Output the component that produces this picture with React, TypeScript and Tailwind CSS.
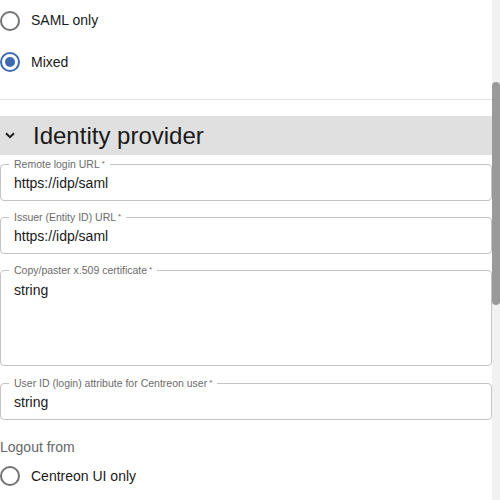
import type { ReactNode } from 'react';

function Radio({ checked = false }: { checked?: boolean }) {
  return (
    <svg width="20" height="20" viewBox="0 0 20 20" fill="none">
      <circle cx="10" cy="10" r="9" stroke={checked ? '#3d6ab0' : '#737373'} strokeWidth="2" />
      {checked && <circle cx="10" cy="10" r="5" fill="#3d6ab0" />}
    </svg>
  );
}

function RadioRow({ label, checked, className }: { label: string; checked?: boolean; className: string }) {
  return (
    <div className={`flex items-center gap-[11px] ${className}`}>
      <Radio checked={checked} />
      <span className="text-[14px] text-[#1a1a1a]">{label}</span>
    </div>
  );
}

function Field({ label, value, tall, className = '' }: { label: string; value: ReactNode; tall?: boolean; className?: string }) {
  return (
    <div
      className={`relative flex rounded-[4px] border border-[#c4c4c4] px-[13px] ${
        tall ? 'h-[96px] items-start pt-[9px]' : 'h-[37px] items-center'
      } ${className}`}
    >
      <span className="absolute -top-[7px] left-[8px] bg-white px-[5px] text-[10.5px] leading-[12px] text-[#6b6b6b]">
        {label}
        <span className="ml-[2px] align-top text-[8px]">*</span>
      </span>
      <span className="text-[14px] leading-[20px] text-[#1a1a1a]">{value}</span>
    </div>
  );
}

export default function App() {
  return (
    <div className="flex h-[500px] w-[500px] overflow-hidden bg-white font-['Liberation_Sans',Arial,sans-serif]">
      <div className="flex w-[492px] flex-col">
        {/* Mode radios */}
        <RadioRow label="SAML only" className="h-[41px]" />
        <RadioRow label="Mixed" checked className="h-[42px]" />

        <div className="mt-4 h-px bg-[#e3e3e3]" />

        {/* Section header */}
        <div className="mt-4 flex h-[39px] items-center gap-[18px] bg-[#e0e0e0] pl-[5px]">
          <svg width="10" height="7" viewBox="0 0 10 7" fill="none">
            <path d="M1 1.2l4 4 4-4" stroke="#1f1f1f" strokeWidth="2" />
          </svg>
          <span className="text-[24px] leading-[28px] text-[#1a1a1a]">Identity provider</span>
        </div>

        {/* Fields */}
        <div className="mt-[9px] flex flex-col gap-4">
          <Field label="Remote login URL" value="https://idp/saml" />
          <Field label="Issuer (Entity ID) URL" value="https://idp/saml" />
          <Field label="Copy/paster x.509 certificate" value="string" tall />
          <Field label="User ID (login) attribute for Centreon user" value="string" className="mt-px" />
        </div>

        <div className="mt-[17px] h-5 text-[14px] leading-[20px] text-[#666666]">Logout from</div>
        <RadioRow label="Centreon UI only" className="h-[38px]" />
      </div>

      {/* Scrollbar */}
      <div className="flex w-2 flex-col bg-[#f1f1f1]">
        <div className="mt-[82px] h-[223px] rounded-full bg-[#9a9a9a]" />
      </div>
    </div>
  );
}
